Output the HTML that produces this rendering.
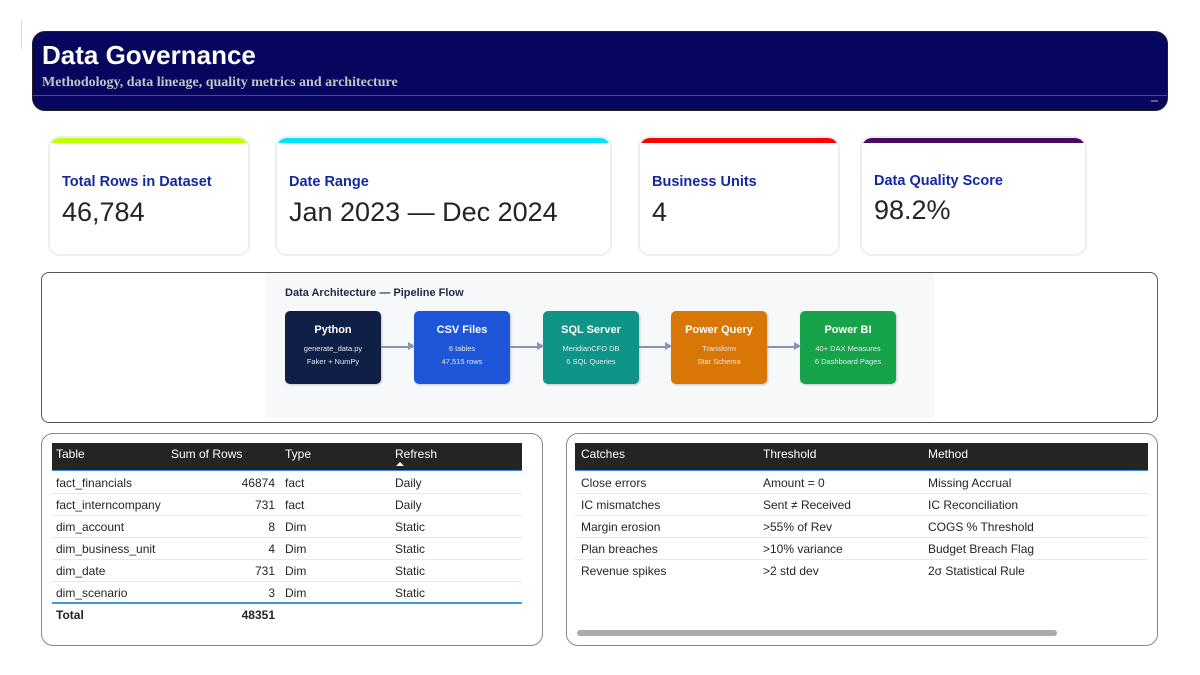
<!DOCTYPE html>
<html><head><meta charset="utf-8"><style>
*{margin:0;padding:0;box-sizing:border-box}
body{width:1200px;height:675px;background:#fff;position:relative;overflow:hidden;font-family:"Liberation Sans","DejaVu Sans",sans-serif;color:#252423}
.a{position:absolute}
.hdr{left:32px;top:31px;width:1136px;height:80px;background:#07065f;border:1px solid #222;border-radius:13px}
.card{position:absolute;top:136px;height:120px;border:2px solid #eee;border-radius:12px;background:#fff;overflow:hidden}
.card .bar{position:absolute;left:0;right:0;top:0;height:5px}
.card .lab{position:absolute;left:12px;top:36px;font-size:14.5px;font-weight:bold;color:#1428a0}
.card .val{position:absolute;left:12px;top:59px;font-size:27px;color:#252423}
.box{position:absolute;top:311px;width:96px;height:73px;border-radius:5px;color:#fff;text-align:center;box-shadow:1px 1px 2px rgba(0,0,0,.2)}
.box b{display:block;font-size:11px;margin-top:13px}
.box span{display:block;font-size:7.5px;line-height:13px;color:#e6e9f0}
.arr{position:absolute;top:346px;height:1.5px;background:#8b93b8}
.arr:after{content:"";position:absolute;right:-2px;top:-4px;border-left:7px solid #8b93b8;border-top:4.5px solid transparent;border-bottom:4.5px solid transparent}
.panel{position:absolute;border:1px solid #888;border-radius:12px;background:#fff}
.th{position:absolute;background:#252423;height:28px;color:#fff;font-size:12px}
.t{position:absolute;font-size:12px;white-space:nowrap}
.rl{position:absolute;height:1px;background:#e8e8e8}
.s{margin-top:1px}
</style></head><body>
<div class="a" style="left:21px;top:20px;width:1px;height:30px;background:#e0e0e0"></div>
<div class="a hdr"></div>
<div class="a" style="left:42px;top:40px;font-size:26px;font-weight:bold;color:#fff">Data Governance</div>
<div class="a" style="left:42px;top:75px;font-family:'Liberation Serif',serif;font-weight:bold;font-size:14px;color:#c4c4c4">Methodology, data lineage, quality metrics and architecture</div>
<div class="a" style="left:33px;top:95px;width:1134px;height:1px;background:#4a4a80"></div>
<div class="a" style="left:1151px;top:100px;width:7px;height:2px;background:#666"></div>

<div class="card" style="left:48px;width:202px"><div class="bar" style="background:#bfff00"></div><div class="lab">Total Rows in Dataset</div><div class="val">46,784</div></div>
<div class="card" style="left:275px;width:337px"><div class="bar" style="background:#00e5ff"></div><div class="lab">Date Range</div><div class="val">Jan 2023 — Dec 2024</div></div>
<div class="card" style="left:638px;width:202px"><div class="bar" style="background:#ff0000"></div><div class="lab">Business Units</div><div class="val">4</div></div>
<div class="card" style="left:860px;width:227px"><div class="bar" style="background:#4a0a5e"></div><div class="lab" style="top:35px">Data Quality Score</div><div class="val" style="top:57px">98.2%</div></div>

<div class="panel" style="left:41px;top:272px;width:1117px;height:151px;border-radius:8px;border-color:#555"></div>
<div class="a" style="left:265px;top:273px;width:669px;height:145px;background:#f7f8fa"></div>
<div class="a" style="left:285px;top:287px;font-size:11px;font-weight:bold;color:#1e2a44">Data Architecture — Pipeline Flow</div>
<div class="box" style="left:285px;background:#0f1f45"><b>Python</b><span style="margin-top:6px">generate_data.py</span><span>Faker + NumPy</span></div>
<div class="box" style="left:414px;background:#1d56d8"><b>CSV Files</b><span style="margin-top:6px">6 tables</span><span>47,515 rows</span></div>
<div class="box" style="left:543px;background:#0f9488"><b>SQL Server</b><span style="margin-top:6px">MeridianCFO DB</span><span>6 SQL Queries</span></div>
<div class="box" style="left:671px;background:#d97706"><b>Power Query</b><span style="margin-top:6px">Transform</span><span>Star Schema</span></div>
<div class="box" style="left:800px;background:#16a34a"><b>Power BI</b><span style="margin-top:6px">40+ DAX Measures</span><span>6 Dashboard Pages</span></div>
<div class="arr" style="left:381px;width:32px"></div>
<div class="arr" style="left:510px;width:32px"></div>
<div class="arr" style="left:639px;width:31px"></div>
<div class="arr" style="left:767px;width:32px"></div>

<div class="panel" style="left:41px;top:433px;width:502px;height:213px"></div>
<div class="th" style="left:52px;top:443px;width:470px;border-bottom:1px solid #3a8de0"></div>
<div class="t" style="left:56px;top:447px;color:#fff">Table</div>
<div class="t" style="left:171px;top:447px;color:#fff">Sum of Rows</div>
<div class="t" style="left:285px;top:447px;color:#fff">Type</div>
<div class="t" style="left:395px;top:447px;color:#fff">Refresh</div>
<div class="a" style="left:396px;top:462px;border-left:4px solid transparent;border-right:4px solid transparent;border-bottom:4px solid #fff"></div>
<div class="t" style="left:56px;top:476px">fact_financials</div><div class="t" style="left:215px;width:60px;text-align:right;top:476px">46874</div><div class="t" style="left:285px;top:476px">fact</div><div class="t" style="left:395px;top:476px">Daily</div>
<div class="rl" style="left:52px;width:470px;top:493px"></div>
<div class="t" style="left:56px;top:498px">fact_interncompany</div><div class="t" style="left:215px;width:60px;text-align:right;top:498px">731</div><div class="t" style="left:285px;top:498px">fact</div><div class="t" style="left:395px;top:498px">Daily</div>
<div class="rl" style="left:52px;width:470px;top:515px"></div>
<div class="t" style="left:56px;top:520px">dim_account</div><div class="t" style="left:215px;width:60px;text-align:right;top:520px">8</div><div class="t" style="left:285px;top:520px">Dim</div><div class="t" style="left:395px;top:520px">Static</div>
<div class="rl" style="left:52px;width:470px;top:537px"></div>
<div class="t" style="left:56px;top:542px">dim_business_unit</div><div class="t" style="left:215px;width:60px;text-align:right;top:542px">4</div><div class="t" style="left:285px;top:542px">Dim</div><div class="t" style="left:395px;top:542px">Static</div>
<div class="rl" style="left:52px;width:470px;top:559px"></div>
<div class="t" style="left:56px;top:564px">dim_date</div><div class="t" style="left:215px;width:60px;text-align:right;top:564px">731</div><div class="t" style="left:285px;top:564px">Dim</div><div class="t" style="left:395px;top:564px">Static</div>
<div class="rl" style="left:52px;width:470px;top:581px"></div>
<div class="t" style="left:56px;top:586px">dim_scenario</div><div class="t" style="left:215px;width:60px;text-align:right;top:586px">3</div><div class="t" style="left:285px;top:586px">Dim</div><div class="t" style="left:395px;top:586px">Static</div>
<div class="a" style="left:52px;width:470px;top:602px;height:2px;background:#3a9be8"></div>
<div class="t" style="left:56px;top:608px;font-weight:bold">Total</div><div class="t" style="left:215px;width:60px;text-align:right;top:608px;font-weight:bold">48351</div>

<div class="panel" style="left:566px;top:433px;width:592px;height:213px"></div>
<div class="th" style="left:575px;top:443px;width:573px;border-bottom:1px solid #3a8de0"></div>
<div class="t" style="left:581px;top:447px;color:#fff">Catches</div>
<div class="t" style="left:763px;top:447px;color:#fff">Threshold</div>
<div class="t" style="left:928px;top:447px;color:#fff">Method</div>
<div class="t" style="left:581px;top:476px">Close errors</div><div class="t" style="left:763px;top:476px">Amount = 0</div><div class="t" style="left:928px;top:476px">Missing Accrual</div>
<div class="rl" style="left:575px;width:573px;top:493px"></div>
<div class="t" style="left:581px;top:498px">IC mismatches</div><div class="t" style="left:763px;top:498px">Sent ≠ Received</div><div class="t" style="left:928px;top:498px">IC Reconciliation</div>
<div class="rl" style="left:575px;width:573px;top:515px"></div>
<div class="t" style="left:581px;top:520px">Margin erosion</div><div class="t" style="left:763px;top:520px">&gt;55% of Rev</div><div class="t" style="left:928px;top:520px">COGS % Threshold</div>
<div class="rl" style="left:575px;width:573px;top:537px"></div>
<div class="t" style="left:581px;top:542px">Plan breaches</div><div class="t" style="left:763px;top:542px">&gt;10% variance</div><div class="t" style="left:928px;top:542px">Budget Breach Flag</div>
<div class="rl" style="left:575px;width:573px;top:559px"></div>
<div class="t" style="left:581px;top:564px">Revenue spikes</div><div class="t" style="left:763px;top:564px">&gt;2 std dev</div><div class="t" style="left:928px;top:564px">2σ Statistical Rule</div>
<div class="a" style="left:577px;top:630px;width:480px;height:6px;border-radius:3px;background:#aaa"></div>
</body></html>
